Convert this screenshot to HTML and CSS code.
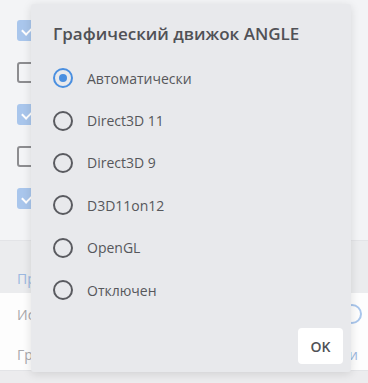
FILE: index.html
```html
<!DOCTYPE html>
<html lang="ru">
<head>
    <meta charset="UTF-8">
    <meta name="viewport" content="width=device-width, initial-scale=1.0">
    <title>Настройки</title>
    <link rel="stylesheet" href="styles.css">
</head>
<body>

    <div class="page">
        <div class="checks">
            <div class="check-row"><span class="box checked"></span></div>
            <div class="check-row"><span class="box"></span></div>
            <div class="check-row"><span class="box checked"></span></div>
            <div class="check-row"><span class="box"></span></div>
            <div class="check-row"><span class="box checked"></span></div>
        </div>
        <div class="section-head">Производительность</div>
        <div class="card">
            <div class="card-row">
                <span>Использовать аппаратное ускорение</span>
                <span class="toggle"></span>
            </div>
            <div class="card-row">
                <span>Графический движок ANGLE</span>
                <span class="value">Автоматически</span>
            </div>
        </div>
    </div>

    <div class="dialog">
        <h2>Графический движок ANGLE</h2>
        <div class="options">
            <label class="option"><span class="radio on"></span>Автоматически</label>
            <label class="option"><span class="radio"></span>Direct3D 11</label>
            <label class="option"><span class="radio"></span>Direct3D 9</label>
            <label class="option"><span class="radio"></span>D3D11on12</label>
            <label class="option"><span class="radio"></span>OpenGL</label>
            <label class="option"><span class="radio"></span>Отключен</label>
        </div>
        <div class="actions">
            <button>OK</button>
        </div>
    </div>

</body>
</html>
```

FILE: styles.css
```css
body { margin: 0; width: 368px; height: 383px; overflow: hidden; background: #ececee; font-family: "Open Sans", sans-serif; position: relative; }
.page { background: #f3f4f6; }
.checks { padding-top: 9px; height: 231px; border-bottom: 1px solid #e3e4e7; }
.check-row { height: 42px; display: flex; align-items: center; padding-left: 17px; }
.box { width: 17px; height: 17px; border: 2px solid #8d8d90; border-radius: 3px; box-sizing: content-box; }
.box.checked { background: #a9c6ec; border-color: #a9c6ec; position: relative; }
.box.checked::after { content: ""; position: absolute; left: 5px; top: 2px; width: 5px; height: 9px; border: solid #fff; border-width: 0 2px 2px 0; transform: rotate(45deg); }
.section-head { background: #ebecee; height: 52px; box-sizing: border-box; padding: 28px 0 0 17px; color: #9cb8e0; font-size: 14px; }
.card { background: #fdfdfd; height: 77px; border-bottom: 1px solid #e3e4e7; }
.card-row { height: 38px; display: flex; align-items: center; justify-content: space-between; padding: 0 6px 0 17px; color: #a8a8ab; font-size: 14px; white-space: nowrap; overflow: hidden; }
.card-row:first-child { height: 42px; }
.card-row:last-child { padding-right: 10px; }
.toggle { width: 16px; height: 16px; border: 2px solid #a9c6ec; border-radius: 50%; flex: none; }
.value { color: #9cb8e0; }

.dialog { position: absolute; left: 31px; top: 4px; width: 320px; height: 368px; background: #e8e9ec; border-radius: 3px; box-shadow: 0 2px 10px rgba(0,0,0,0.12); box-sizing: border-box; padding: 20px 8px 8px 22px; display: flex; flex-direction: column; }
.dialog h2 { margin: 0 0 14px 0; font-size: 17px; font-weight: 600; color: #505156; line-height: 19px; }
.options { flex: 1; }
.option { display: flex; align-items: center; height: 42.4px; font-size: 14px; color: #56575b; cursor: pointer; }
.radio { width: 16px; height: 16px; border: 2px solid #5a5b60; border-radius: 50%; margin: 0 14px 0 0; flex: none; position: relative; }
.radio.on { border-color: #4a8fe0; }
.radio.on::after { content: ""; position: absolute; left: 4px; top: 4px; width: 8px; height: 8px; border-radius: 50%; background: #4a8fe0; }
.actions { display: flex; justify-content: flex-end; }
button { background: white; color: #505156; border: none; cursor: pointer; border-radius: 4px; font-family: "Open Sans", sans-serif; font-size: 14px; font-weight: 600; width: 45px; height: 36px; padding: 0; }
```
